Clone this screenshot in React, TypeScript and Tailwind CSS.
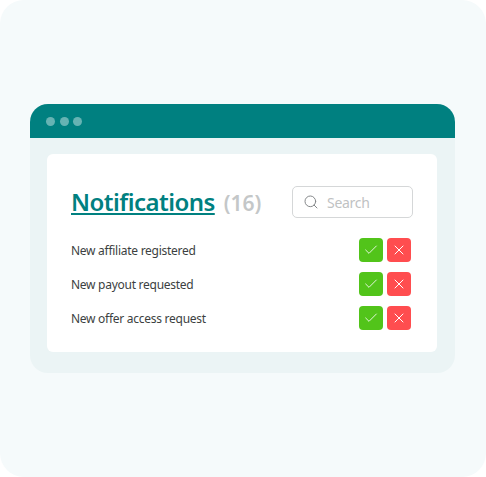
import { Check, Search, X } from 'lucide-react'

const rows = ['New affiliate registered', 'New payout requested', 'New offer access request']

function NotificationRow({ label }: { label: string }) {
  return (
    <div className="flex h-[24px] items-center justify-between pr-[2px]">
      <span className="pt-[2px] text-[12px] leading-none tracking-[-0.27px] text-[#3c3f41]">{label}</span>
      <div className="flex gap-[4px]">
        <button className="flex h-[24px] w-[24px] items-center justify-center rounded-[4px] bg-[#52c41a]">
          <Check className="h-[16px] w-[16px] text-white" strokeWidth={1.25} />
        </button>
        <button className="flex h-[24px] w-[24px] items-center justify-center rounded-[4px] bg-[#ff4d4f]">
          <X className="h-[16px] w-[16px] text-white" strokeWidth={1.5} />
        </button>
      </div>
    </div>
  )
}

export default function App() {
  return (
    <div className="h-[477px] w-[486px] bg-white font-['Noto_Sans',sans-serif]">
      <div className="flex h-full flex-col rounded-[24px] bg-[#f5fafb] pb-[104px] pl-[30px] pr-[31px] pt-[104px]">
        {/* Window */}
        <div className="flex flex-col overflow-hidden rounded-[18px] bg-[#ebf4f5]">
          <div className="flex h-[34px] items-center gap-[4.5px] bg-[#008080] pl-[16px]">
            <span className="h-[9px] w-[9px] rounded-full bg-[#66b3b3]" />
            <span className="h-[9px] w-[9px] rounded-full bg-[#66b3b3]" />
            <span className="h-[9px] w-[9px] rounded-full bg-[#66b3b3]" />
          </div>

          <div className="pb-[21px] pl-[17px] pr-[18px] pt-[16px]">
            <div className="rounded-[6px] bg-white pb-[22px] pl-[24px] pr-[24px] pt-[32px]">
              <div className="flex items-center justify-between">
                <div className="flex items-baseline gap-[9px]">
                  <h1 className="text-[24px] font-semibold leading-[32px] tracking-[-0.53px] text-[#008080] underline decoration-2 underline-offset-2 [text-decoration-skip-ink:none]">
                    Notifications
                  </h1>
                  <span className="text-[21px] font-semibold leading-none text-[#c4c7c8]">(16)</span>
                </div>
                <div className="flex h-[32px] w-[121px] items-center gap-[8px] rounded-[5px] border border-[#d5d7d8] pl-[10px]">
                  <Search className="h-[16px] w-[16px] text-[#85888a]" strokeWidth={1.5} />
                  <span className="text-[14px] tracking-[-0.3px] text-[#bfc2c3]">Search</span>
                </div>
              </div>

              <div className="mt-[20px] flex flex-col gap-[10px]">
                {rows.map((label) => (
                  <NotificationRow key={label} label={label} />
                ))}
              </div>
            </div>
          </div>
        </div>
      </div>
    </div>
  )
}
